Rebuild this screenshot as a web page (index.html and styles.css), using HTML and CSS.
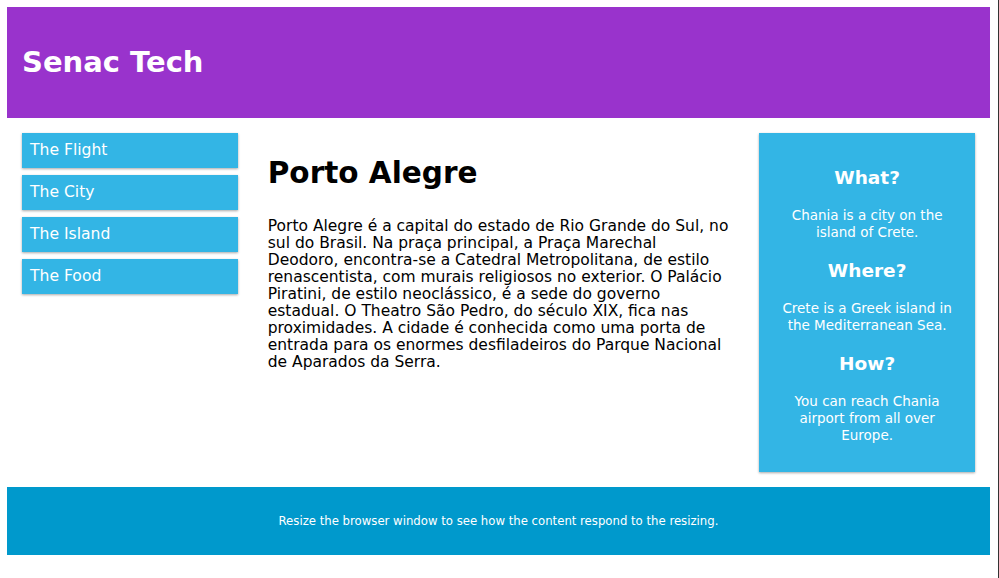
FILE: index.html
```html
<!DOCTYPE html>
<html>
<head>
<meta charset="utf-8">
<title>Senac Tech</title>
<link rel="stylesheet" href="styles.css">
</head>
<body>
<div class="header">
  <h1>Senac Tech</h1>
</div>
<div class="row">
  <div class="col-3 menu">
    <ul>
      <li>The Flight</li>
      <li>The City</li>
      <li>The Island</li>
      <li>The Food</li>
    </ul>
  </div>
  <div class="col-6 main">
    <h1>Porto Alegre</h1>
    <p>Porto Alegre é a capital do estado de Rio Grande do Sul, no sul do Brasil. Na praça principal, a Praça Marechal Deodoro, encontra-se a Catedral Metropolitana, de estilo renascentista, com murais religiosos no exterior. O Palácio Piratini, de estilo neoclássico, é a sede do governo estadual. O Theatro São Pedro, do século XIX, fica nas proximidades. A cidade é conhecida como uma porta de entrada para os enormes desfiladeiros do Parque Nacional de Aparados da Serra.</p>
  </div>
  <div class="col-3 side">
    <div class="aside">
      <h2>What?</h2>
      <p>Chania is a city on the island of Crete.</p>
      <h2>Where?</h2>
      <p>Crete is a Greek island in the Mediterranean Sea.</p>
      <h2>How?</h2>
      <p>You can reach Chania airport from all over Europe.</p>
    </div>
  </div>
</div>
<div class="footer">
  <p>Resize the browser window to see how the content respond to the resizing.</p>
</div>
</body>
</html>
```
FILE: styles.css
```css
* { box-sizing: border-box; }
html {
  font-family: "DejaVu Sans", sans-serif;
  border-right: 1px solid #333;
  min-height: 100%;
}
body { margin: 7px 8px 8px 7px; }
.header {
  background-color: #9933cc;
  color: #ffffff;
  padding: 15px;
}
.header h1 {
  margin: 21px 0;
  font-size: 29px;
  line-height: 39px;
}
.row { display: flex; }
.col-3 { width: 25%; padding: 15px; }
.col-6 { width: 50%; padding: 15px; }
.menu ul { list-style-type: none; margin: 0; padding: 0; }
.menu li {
  padding: 8px;
  margin-bottom: 7px;
  background-color: #33b5e5;
  color: #ffffff;
  font-size: 15.6px;
  line-height: 19px;
  box-shadow: 0 1px 3px rgba(0,0,0,0.12), 0 1px 2px rgba(0,0,0,0.24);
}
.main h1 {
  font-size: 29.5px;
  line-height: 38px;
  margin: 21px 0 26px;
}
.main p {
  font-size: 15.5px;
  line-height: 17px;
  margin: 0;
}
.aside {
  background-color: #33b5e5;
  padding: 15px;
  color: #ffffff;
  text-align: center;
  font-size: 13.5px;
  line-height: 17px;
  box-shadow: 0 1px 3px rgba(0,0,0,0.12), 0 1px 2px rgba(0,0,0,0.24);
}
.aside h2 {
  font-size: 18.5px;
  line-height: 25px;
  margin: 17px 0;
}
.aside p { margin: 14px 0; }
.aside p:last-child { margin-bottom: 13px; }
.footer {
  background-color: #0099cc;
  color: #ffffff;
  text-align: center;
  font-family: "DejaVu Sans Condensed", "DejaVu Sans", sans-serif;
  font-stretch: condensed;
  font-size: 13px;
  line-height: 14px;
  padding: 15px;
}
.footer p { margin: 12px 0; }
```
